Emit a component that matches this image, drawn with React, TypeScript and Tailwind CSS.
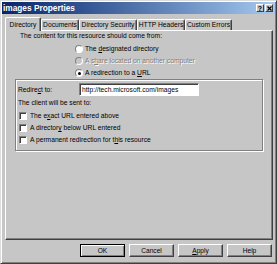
import React from "react";

type TabDef = { label: string; w: string; active?: boolean };

const tabs: TabDef[] = [
  { label: "Directory", w: "w-[36px]", active: true },
  { label: "Documents", w: "w-[38px]" },
  { label: "Directory Security", w: "w-[58px]" },
  { label: "HTTP Headers", w: "w-[48px]" },
  { label: "Custom Errors", w: "w-[47px]" },
];

const Radio = ({ checked, disabled }: { checked?: boolean; disabled?: boolean }) => (
  <span
    className={`flex h-[8px] w-[8px] shrink-0 items-center justify-center rounded-full border border-t-[#808080] border-l-[#808080] border-r-white border-b-white ${
      disabled ? "bg-[#c6c6c6]" : "bg-white"
    }`}
  >
    {checked && <span className="h-[3px] w-[3px] rounded-full bg-black" />}
  </span>
);

const Check = () => (
  <span className="h-[8px] w-[8px] shrink-0 border border-t-[#808080] border-l-[#808080] border-r-white border-b-white bg-white shadow-[inset_1px_1px_0_#404040]" />
);

const Btn = ({ children, def }: { children: React.ReactNode; def?: boolean }) => (
  <button
    className={`flex h-[13px] w-[45px] items-center justify-center bg-[#c6c6c6] text-[6.6px] ${
      def
        ? "border border-black shadow-[inset_1px_1px_0_#fff,inset_-1px_-1px_0_#808080]"
        : "border border-t-white border-l-white border-r-[#404040] border-b-[#404040] shadow-[inset_-1px_-1px_0_#808080]"
    }`}
  >
    {children}
  </button>
);

const TitleBtn = ({ children }: { children: React.ReactNode }) => (
  <span className="flex h-[8px] w-[8px] items-center justify-center border border-t-white border-l-white border-r-[#404040] border-b-[#404040] bg-[#c6c6c6] text-[7px] font-bold leading-none text-black">
    {children}
  </span>
);

export default function App() {
  return (
    <div className="flex h-[264px] w-[277px] flex-col border border-t-[#dcdcdc] border-l-[#dcdcdc] border-r-[#404040] border-b-[#404040] bg-[#c6c6c6] p-[1px] font-['Liberation_Sans',Arial,sans-serif] text-[6.7px] leading-[8px] text-black shadow-[inset_1px_1px_0_#fff,inset_-1px_-1px_0_#808080]">
      {/* title bar */}
      <div className="flex h-[12px] items-center justify-between bg-gradient-to-r from-[#0a246a] to-[#a6caf0] pl-[1px] pr-[2px]">
        <span className="text-[8.3px] font-bold text-white">images Properties</span>
        <div className="flex gap-[1px]">
          <TitleBtn>?</TitleBtn>
          <TitleBtn>
            <svg width="5" height="5" viewBox="0 0 5 5">
              <path d="M0.5 0.5 L4.5 4.5 M4.5 0.5 L0.5 4.5" stroke="black" strokeWidth="1.2" />
            </svg>
          </TitleBtn>
        </div>
      </div>

      {/* tabs */}
      <div className="mt-[3px] flex h-[13px] items-end pl-[3px]">
        {tabs.map((t) =>
          t.active ? (
            <div
              key={t.label}
              className={`relative z-10 -mb-px flex h-[14px] ${t.w} items-center justify-center rounded-t-[2px] border-t border-l border-r border-t-white border-l-white border-r-[#404040] bg-[#c6c6c6] shadow-[inset_-1px_0_0_#808080]`}
            >
              {t.label}
            </div>
          ) : (
            <div
              key={t.label}
              className={`flex h-[11px] ${t.w} items-center justify-center rounded-t-[2px] border-t border-l border-r border-t-white border-l-white border-r-[#404040] shadow-[inset_-1px_0_0_#808080]`}
            >
              {t.label}
            </div>
          )
        )}
      </div>

      {/* tab panel */}
      <div className="ml-[3px] flex h-[210px] w-[268px] flex-col border border-t-white border-l-white border-r-[#404040] border-b-[#404040] shadow-[inset_-1px_-1px_0_#808080]">
        <p className="ml-[14px] mt-[1px]">The content for this resource should come from:</p>

        <div className="ml-[69px] mt-[3px] flex flex-col">
          <label className="flex h-[12px] items-center gap-[2px]">
            <Radio />
            <span>
              The <u>d</u>esignated directory
            </span>
          </label>
          <label className="flex h-[12px] items-center gap-[2px]">
            <Radio disabled />
            <span className="text-[#808080] [text-shadow:1px_1px_0_#fff]">
              A s<u>h</u>are located on another computer
            </span>
          </label>
          <label className="flex h-[12px] items-center gap-[2px]">
            <Radio checked />
            <span>
              A redirection to a <u>U</u>RL
            </span>
          </label>
        </div>

        <div className="ml-[9px] flex h-[72px] w-[248px] flex-col border border-[#808080] shadow-[inset_1px_1px_0_#fff,1px_1px_0_#fff]">
          <div className="ml-[2px] mt-[3px] flex h-[13px] items-center">
            <span className="w-[61px]">
              Redire<u>c</u>t to:
            </span>
            <div className="flex h-[13px] w-[120px] items-center border border-t-[#808080] border-l-[#808080] border-r-white border-b-white bg-white pl-[2px] shadow-[inset_1px_1px_0_#404040]">
              http://tech.microsoft.com/images
            </div>
          </div>
          <p className="ml-[2px] mt-[3px]">The client will be sent to:</p>
          <div className="ml-[3px] mt-[3px] flex flex-col">
            <label className="flex h-[12px] items-center gap-[3px]">
              <Check />
              <span>
                The e<u>x</u>act URL entered above
              </span>
            </label>
            <label className="flex h-[12px] items-center gap-[3px]">
              <Check />
              <span>
                A director<u>y</u> below URL entered
              </span>
            </label>
            <label className="flex h-[12px] items-center gap-[3px]">
              <Check />
              <span>
                A permanent redirection for t<u>h</u>is resource
              </span>
            </label>
          </div>
        </div>
      </div>

      {/* buttons */}
      <div className="mt-[4px] flex justify-end gap-[4px] pr-[3px]">
        <Btn def>OK</Btn>
        <Btn>Cancel</Btn>
        <Btn>
          <span>
            <u>A</u>pply
          </span>
        </Btn>
        <Btn>Help</Btn>
      </div>
    </div>
  );
}
